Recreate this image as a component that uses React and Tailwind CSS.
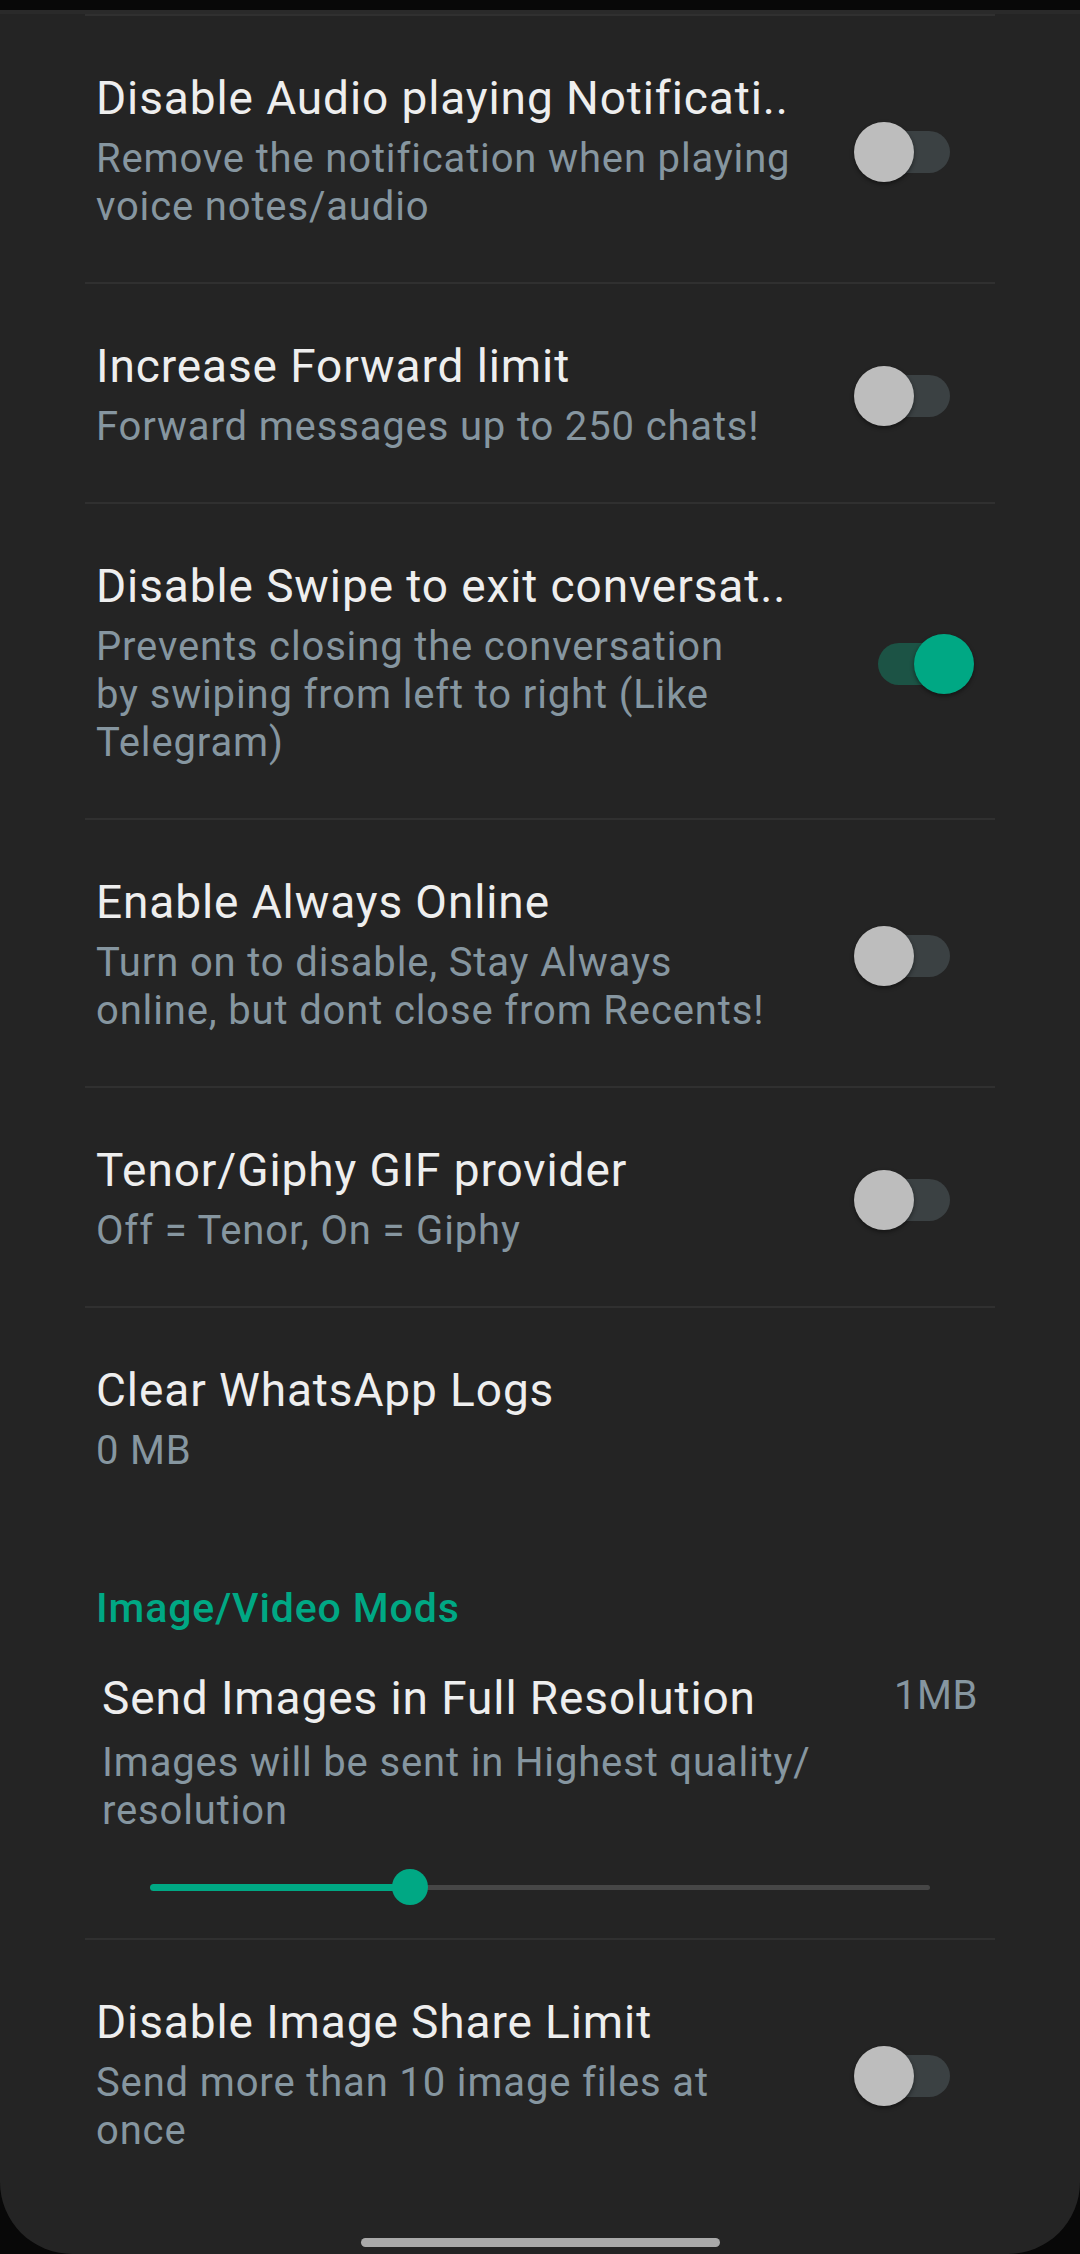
import React from 'react';

// settings rows (subtitle lines are kept as shown on the device)
const rowsTop = [
    { title: 'Disable Audio playing Notificati..', lines: ['Remove the notification when playing', 'voice notes/audio'], on: false },
    { title: 'Increase Forward limit', lines: ['Forward messages up to 250 chats!'], on: false },
    { title: 'Disable Swipe to exit conversat..', lines: ['Prevents closing the conversation', 'by swiping from left to right (Like', 'Telegram)'], on: true },
    { title: 'Enable Always Online', lines: ['Turn on to disable, Stay Always', 'online, but dont close from Recents!'], on: false },
    { title: 'Tenor/Giphy GIF provider', lines: ['Off = Tenor, On = Giphy'], on: false },
];

const Toggle = ({ on }) => {
    return (
        <div className={'relative w-[72px] h-[42px] rounded-full mr-[45px] shrink-0 ' + (on ? 'bg-[#1c5345]' : 'bg-[#3b4143]')}>
            <div
                className={
                    'absolute top-[-9px] w-[60px] h-[60px] rounded-full shadow-[0_2px_4px_rgba(0,0,0,0.45)] ' +
                    (on ? 'left-[36px] bg-[#00a884]' : 'left-[-24px] bg-[#bdbdbd]')
                }
            />
        </div>
    );
};

const Title = ({ children }) => {
    return <div className="text-[46px] leading-[52px] tracking-[0.9px] text-[#eeeeee] whitespace-nowrap">{children}</div>;
};

const Lines = ({ lines, className }) => {
    return (
        <div className={'text-[40px] leading-[48px] tracking-[0.85px] text-[#8696a0] ' + className}>
            {lines.map((l) => (
                <div key={l} className="whitespace-nowrap">{l}</div>
            ))}
        </div>
    );
};

const SwitchRow = ({ title, lines, on, last }) => {
    return (
        <div className={'flex items-center pt-[56px] pb-[51px] ' + (last ? '' : 'border-b-2 border-[#303030]')}>
            <div className="flex-1 pl-[11px]">
                <Title>{title}</Title>
                <Lines lines={lines} className="mt-[11px]" />
            </div>
            <Toggle on={on} />
        </div>
    );
};

const App = () => {
    return (
        <div className="w-[1080px] h-[2254px] bg-[#080808] pt-[10px] font-['Roboto',sans-serif]">
            <div className="h-[2244px] bg-[#242424] rounded-bl-[72px] rounded-br-[72px] overflow-hidden flex flex-col">
                <div className="h-[4px] bg-[#2a2a2a]"></div>
                <div className="px-[85px]">
                    <div className="border-t-2 border-[#303030]">
                        {rowsTop.map((r) => (
                            <SwitchRow key={r.title} {...r} />
                        ))}

                        {/* clear logs */}
                        <div className="pt-[56px] pb-[51px] pl-[11px]">
                            <Title>Clear WhatsApp Logs</Title>
                            <Lines lines={['0 MB']} className="mt-[11px]" />
                        </div>

                        {/* section */}
                        <div className="pl-[11px] mt-[58px] text-[41px] leading-[48px] tracking-[0.9px] font-medium text-[#00a884]">Image/Video Mods</div>

                        {/* seekbar pref */}
                        <div className="mt-[40px] pb-[33px] border-b-2 border-[#303030]">
                            <div className="flex items-start pl-[17px] pr-[17px]">
                                <div className="flex-1">
                                    <Title>Send Images in Full Resolution</Title>
                                    <Lines lines={['Images will be sent in Highest quality/', 'resolution']} className="mt-[15px]" />
                                </div>
                                <div className="text-[40px] leading-[48px] tracking-[0.6px] text-[#8696a0]">1MB</div>
                            </div>
                            <div className="relative mx-[65px] mt-[34px] h-[36px] flex items-center">
                                <div className="h-[7px] w-[260px] bg-[#00a884] rounded-full"></div>
                                <div className="h-[5px] flex-1 bg-[#464646] rounded-r-full"></div>
                                <div className="absolute left-[242px] top-0 w-[36px] h-[36px] rounded-full bg-[#00a884]"></div>
                            </div>
                        </div>

                        <SwitchRow
                            title="Disable Image Share Limit"
                            lines={['Send more than 10 image files at', 'once']}
                            on={false}
                            last
                        />
                    </div>
                </div>

                {/* nav handle */}
                <div className="mt-auto mb-[7px] flex justify-center">
                    <div className="w-[359px] h-[9px] rounded-full bg-[#aaaaaa]"></div>
                </div>
            </div>
        </div>
    );
};

export default App;
